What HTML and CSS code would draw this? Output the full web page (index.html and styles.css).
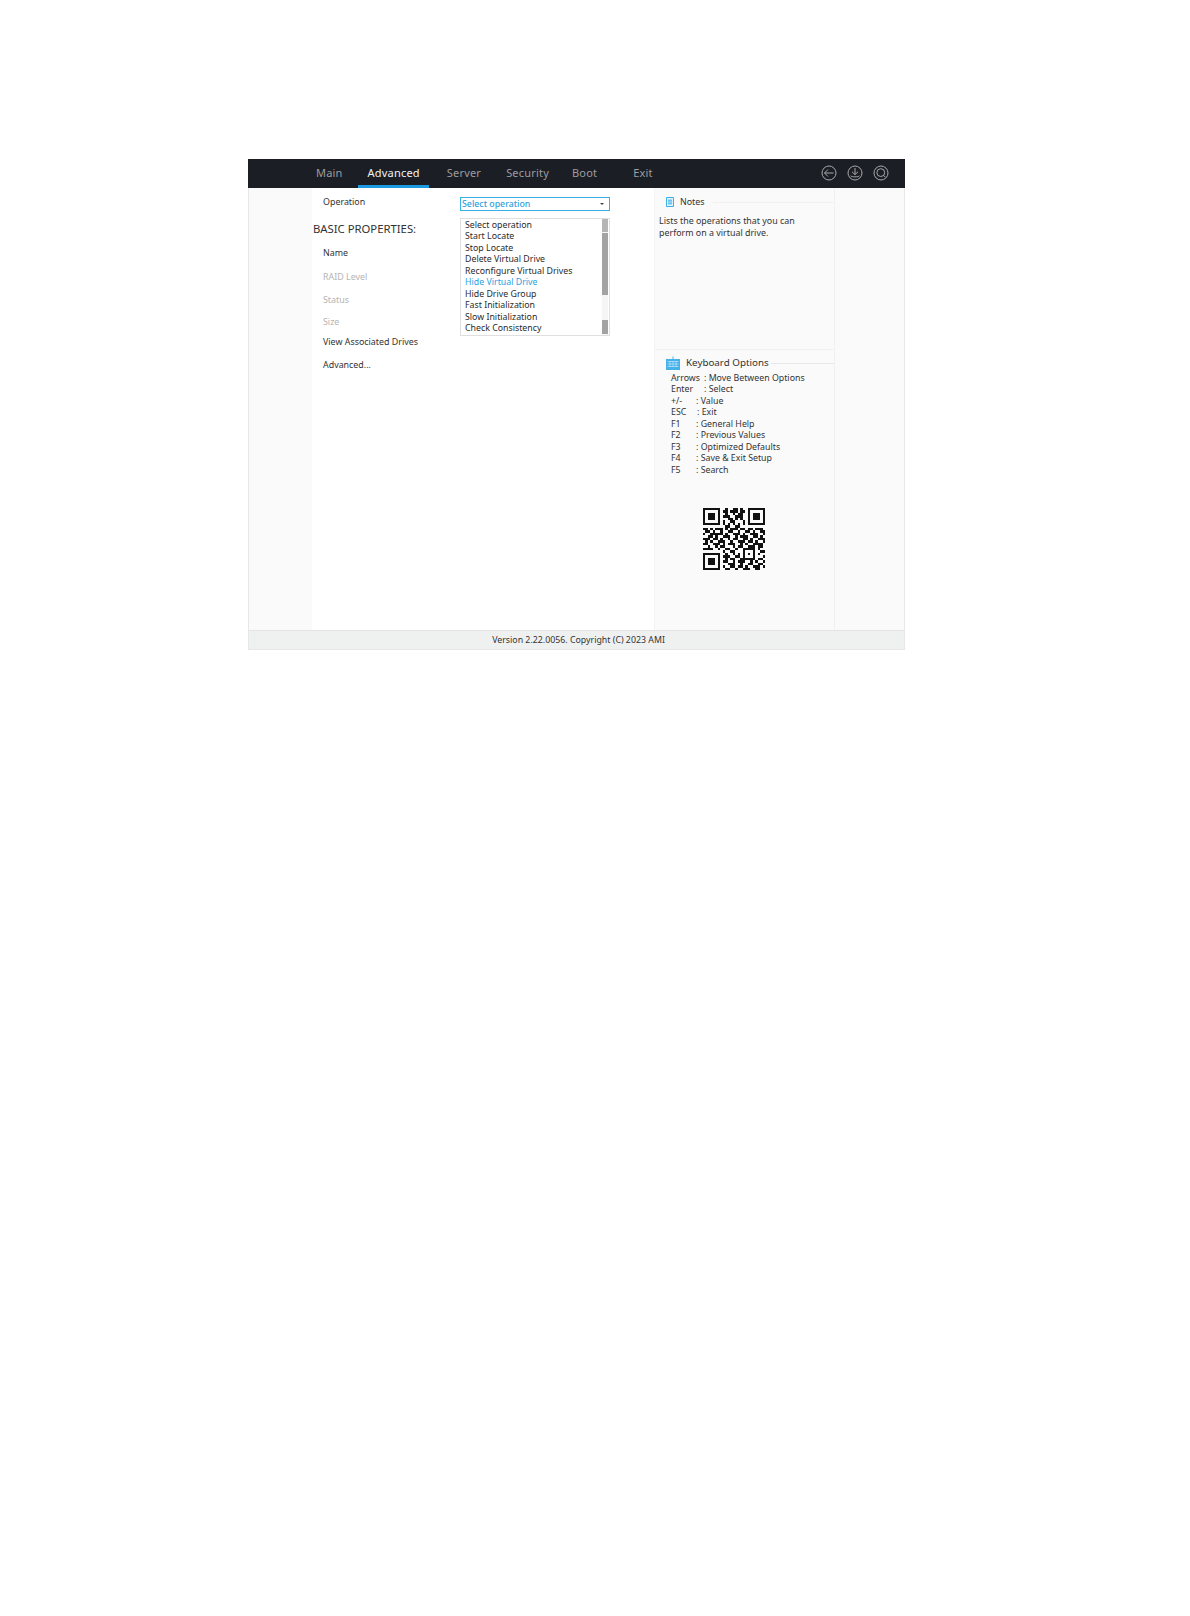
FILE: index.html
```html
<!DOCTYPE html>
<html lang="en">
<head>
    <meta charset="UTF-8">
    <title>BIOS Setup - Advanced</title>
    <link rel="stylesheet" href="styles.css">
</head>
<body>
    <div class="setup-screen">
        <!-- Top menu -->
        <div class="top-bar">
            <div class="tabs">
                <span class="tab tab-main">Main</span>
                <span class="tab tab-advanced active">Advanced</span>
                <span class="tab tab-server">Server</span>
                <span class="tab tab-security">Security</span>
                <span class="tab tab-boot">Boot</span>
                <span class="tab tab-exit">Exit</span>
            </div>
            <div class="top-icons">
                <svg class="top-icon" viewBox="0 0 16 16"><circle cx="8" cy="8" r="7"/><path d="M3.5 8h9M7 4.5 3.5 8 7 11.5"/></svg>
                <svg class="top-icon" viewBox="0 0 16 16"><circle cx="8" cy="8" r="7"/><path d="M8 3v6.5M5 6.8 8 9.6l3-2.8M3.6 10.8c1 1.4 8 1.4 8.8 0"/></svg>
                <svg class="top-icon" viewBox="0 0 16 16"><circle cx="8" cy="8" r="7"/><circle cx="7.8" cy="7.6" r="3.9"/><path d="M10.6 10.4 12.4 12.2"/></svg>
            </div>
        </div>

        <div class="main">
            <div class="gutter"></div>

            <div class="content">
                <div class="props">
                    <div class="prop first">Operation</div>
                    <div class="section-title">BASIC PROPERTIES:</div>
                    <div class="prop prop-name">Name</div>
                    <div class="prop prop-raid disabled">RAID Level</div>
                    <div class="prop prop-status disabled">Status</div>
                    <div class="prop prop-size disabled">Size</div>
                    <div class="prop prop-view">View Associated Drives</div>
                    <div class="prop prop-adv">Advanced...</div>
                </div>

                <div class="operation-col">
                    <div class="select-box">
                        <span>Select operation</span>
                        <span class="caret"></span>
                    </div>
                    <div class="list-box">
                        <div class="list-items">
                            <div>Select operation</div>
                            <div>Start Locate</div>
                            <div>Stop Locate</div>
                            <div>Delete Virtual Drive</div>
                            <div>Reconfigure Virtual Drives</div>
                            <div class="current">Hide Virtual Drive</div>
                            <div>Hide Drive Group</div>
                            <div>Fast Initialization</div>
                            <div>Slow Initialization</div>
                            <div>Check Consistency</div>
                        </div>
                        <div class="scrollbar">
                            <div class="thumb thumb-top"></div>
                            <div class="thumb thumb-mid"></div>
                            <div class="thumb thumb-end"></div>
                        </div>
                    </div>
                </div>
            </div>

            <!-- Notes and keyboard help -->
            <div class="side">
                <div class="notes">
                    <div class="side-title notes-title">
                        <svg class="notes-icon" viewBox="0 0 8 10"><path d="M.5.5h7v9h-7z"/><path d="M2 3.2h4M2 5h4M2 6.8h4"/></svg>
                        <span>Notes</span>
                    </div>
                    <p>Lists the operations that you can<br>perform on a virtual drive.</p>
                </div>

                <div class="keyboard">
                    <div class="side-title keyboard-title">
                        <svg class="keyboard-icon" viewBox="0 0 14 14"><path class="kb-fill" d="M0 3h14v11H0z"/><path class="kb-wire" d="M7 3V.5"/><path class="kb-lines" d="M1.5 5.5h11M1.5 8h11M1.5 10.5h11M4 5v6M7 5v6M10 5v6"/></svg>
                        <span>Keyboard Options</span>
                    </div>
                    <div class="key-list">
                        <div class="key-row"><span class="key wide">Arrows</span><span>: Move Between Options</span></div>
                        <div class="key-row"><span class="key wide">Enter</span><span>: Select</span></div>
                        <div class="key-row"><span class="key">+/-</span><span>: Value</span></div>
                        <div class="key-row"><span class="key esc">ESC</span><span>: Exit</span></div>
                        <div class="key-row"><span class="key">F1</span><span>: General Help</span></div>
                        <div class="key-row"><span class="key">F2</span><span>: Previous Values</span></div>
                        <div class="key-row"><span class="key">F3</span><span>: Optimized Defaults</span></div>
                        <div class="key-row"><span class="key">F4</span><span>: Save &amp; Exit Setup</span></div>
                        <div class="key-row"><span class="key">F5</span><span>: Search</span></div>
                    </div>
                    <svg class="qr" viewBox="0 0 25 25" shape-rendering="crispEdges">
                        <path d="M0 .5h7M9 .5h1M12 .5h2M15 .5h1M18 .5h7
                        M0 1.5h1M6 1.5h1M8 1.5h2M11 1.5h3M15 1.5h2M18 1.5h1M24 1.5h1
                        M0 2.5h1M2 2.5h3M6 2.5h1M9 2.5h1M12 2.5h1M14 2.5h2M18 2.5h1M20 2.5h3M24 2.5h1
                        M0 3.5h1M2 3.5h3M6 3.5h1M8 3.5h3M13 3.5h3M18 3.5h1M20 3.5h3M24 3.5h1
                        M0 4.5h1M2 4.5h3M6 4.5h1M10 4.5h2M13 4.5h1M15 4.5h1M18 4.5h1M20 4.5h3M24 4.5h1
                        M0 5.5h1M6 5.5h1M8 5.5h1M11 5.5h2M16 5.5h1M18 5.5h1M24 5.5h1
                        M0 6.5h7M8 6.5h1M10 6.5h1M12 6.5h1M14 6.5h1M16 6.5h1M18 6.5h7
                        M9 7.5h2M13 7.5h2
                        M0 8.5h2M3 8.5h1M5 8.5h3M9 8.5h1M11 8.5h3M15 8.5h2M18 8.5h2M21 8.5h3
                        M1 9.5h2M4 9.5h1M7 9.5h1M10 9.5h2M14 9.5h1M17 9.5h2M20 9.5h1M23 9.5h2
                        M0 10.5h1M3 10.5h5M9 10.5h1M12 10.5h3M16 10.5h1M19 10.5h3M24 10.5h1
                        M2 11.5h2M5 11.5h1M8 11.5h3M13 11.5h1M15 11.5h3M20 11.5h2M23 11.5h1
                        M0 12.5h3M4 12.5h2M7 12.5h1M10 12.5h1M12 12.5h2M16 12.5h2M19 12.5h1M22 12.5h3
                        M1 13.5h1M3 13.5h1M6 13.5h3M11 13.5h1M14 13.5h3M18 13.5h2M21 13.5h1M24 13.5h1
                        M0 14.5h2M4 14.5h3M8 14.5h1M10 14.5h3M15 14.5h1M17 14.5h1M20 14.5h3M23 14.5h1
                        M2 15.5h1M5 15.5h1M7 15.5h2M12 15.5h1M14 15.5h2M18 15.5h3M22 15.5h2
                        M0 16.5h4M6 16.5h1M9 16.5h2M13 16.5h1M16 16.5h5M22 16.5h1
                        M8 17.5h1M11 17.5h2M16 17.5h1M20 17.5h1M23 17.5h2
                        M0 18.5h7M9 18.5h1M12 18.5h1M14 18.5h1M16 18.5h1M18 18.5h1M20 18.5h1M22 18.5h1
                        M0 19.5h1M6 19.5h1M8 19.5h3M13 19.5h2M16 19.5h1M20 19.5h1M24 19.5h1
                        M0 20.5h1M2 20.5h3M6 20.5h1M9 20.5h1M11 20.5h2M15 20.5h6M22 20.5h2
                        M0 21.5h1M2 21.5h3M6 21.5h1M8 21.5h2M12 21.5h1M14 21.5h3M19 21.5h1M21 21.5h1M24 21.5h1
                        M0 22.5h1M2 22.5h3M6 22.5h1M10 22.5h3M15 22.5h1M18 22.5h2M22 22.5h2
                        M0 23.5h1M6 23.5h1M8 23.5h1M11 23.5h2M14 23.5h2M17 23.5h1M20 23.5h3M24 23.5h1
                        M0 24.5h7M9 24.5h2M13 24.5h1M16 24.5h3M21 24.5h2"/>
                    </svg>
                </div>
            </div>

            <div class="gutter-right"></div>
        </div>

        <div class="footer">Version 2.22.0056. Copyright (C) 2023 AMI</div>
    </div>
</body>
</html>
```

FILE: styles.css
```css
* {
    margin: 0;
    padding: 0;
    box-sizing: border-box;
}

body {
    font-family: "Noto Sans", "DejaVu Sans", sans-serif;
    background: white;
    color: #2b2b2b;
    padding: 159px 0 0 248px;
}

.setup-screen {
    width: 657px;
    height: 491px;
    display: flex;
    flex-direction: column;
    border: 1px solid #e6e8e7;
    border-top: none;
}

/* Top menu */
.top-bar {
    height: 29px;
    margin: 0 -1px;
    background: #1c1e26;
    display: flex;
    flex: none;
    justify-content: space-between;
}

.tabs {
    display: flex;
    padding-left: 68px;
}

.tab {
    font-size: 11px;
    line-height: 27px;
    color: #9b9d9f;
    letter-spacing: 0.2px;
}

.tab-server {
    margin-left: 18px;
}

.tab-security {
    margin-left: 25px;
}

.tab-boot {
    margin-left: 23px;
}

.tab-exit {
    margin-left: 36px;
}

.tab.active {
    color: #f2f2f2;
    padding: 0 9px 0 10px;
    margin-left: 15px;
    border-bottom: 3px solid #1a9be0;
}

.top-icons {
    display: flex;
    align-items: center;
    gap: 10px;
    padding-right: 16px;
    padding-bottom: 1px;
}

.top-icon {
    width: 16px;
    height: 16px;
    fill: none;
    stroke: #a8a8a8;
    stroke-width: 1;
}

.main {
    flex: 1;
    display: flex;
    min-height: 0;
}

.gutter {
    width: 63px;
    background: #fafafa;
}

.gutter-right {
    flex: 1;
    background: #fafafa;
    border-left: 1px solid #f1f1f1;
}

/* Left column */
.content {
    width: 342px;
    display: flex;
    background: white;
}

.props {
    width: 148px;
    font-size: 8.9px;
    line-height: 12px;
    padding-top: 8px;
}

.prop {
    padding-left: 11px;
    color: #333;
}

.section-title {
    font-size: 11.3px;
    line-height: 14px;
    margin-top: 14px;
    padding-left: 1px;
    color: #333;
}

.prop-name {
    margin-top: 11px;
}

.prop-raid {
    margin-top: 12px;
}

.prop-status {
    margin-top: 11px;
}

.prop-size {
    margin-top: 10px;
}

.prop-view {
    margin-top: 8px;
}

.prop-adv {
    margin-top: 11px;
}

.prop.disabled {
    color: #b4b4b4;
}

/* Operation select */
.operation-col {
    width: 150px;
    padding-top: 9px;
}

.select-box {
    height: 14px;
    border: 1px solid #3ab0e8;
    color: #2f9fdc;
    font-size: 8.8px;
    font-weight: 500;
    line-height: 12px;
    padding: 0 5px 0 1px;
    display: flex;
    align-items: center;
    justify-content: space-between;
}

.caret {
    width: 0;
    height: 0;
    border-left: 2px solid transparent;
    border-right: 2px solid transparent;
    border-top: 2px solid #444;
}

.list-box {
    height: 118px;
    margin-top: 7px;
    border: 1px solid #dfdfdf;
    display: flex;
    justify-content: space-between;
}

.list-items {
    padding: 1px 0 0 4px;
    font-size: 8.8px;
    line-height: 11.45px;
    color: #2b2b2b;
    white-space: nowrap;
}

.list-items .current {
    color: #2b9fe0;
}

.scrollbar {
    width: 6px;
    margin-right: 1px;
    display: flex;
    flex-direction: column;
    background: #f5f5f5;
}

.thumb {
    background: #a3a3a3;
}

.thumb-top {
    height: 13px;
    background: #b5b5b5;
}

.thumb-mid {
    height: 62px;
    margin-top: 1px;
}

.thumb-end {
    height: 14px;
    margin-top: auto;
    margin-bottom: 1px;
}

/* Notes and keyboard help */
.side {
    width: 180px;
    background: #fafafa;
    border-left: 1px solid #f3f3f3;
    display: flex;
    flex-direction: column;
}

.notes {
    height: 162px;
    padding-top: 8px;
    border-bottom: 1px solid #f1f1f1;
}

.side-title {
    display: flex;
    align-items: center;
    font-size: 8.9px;
    line-height: 12px;
    color: #333;
    padding-left: 11px;
}

.notes-title::after {
    content: "";
    flex: 1;
    height: 1px;
    margin-left: 8px;
    background: #f1f1f1;
}

.notes-icon {
    width: 8px;
    height: 10px;
    margin-right: 6px;
    fill: #dff1fb;
    stroke: #3ab0e8;
    stroke-width: 1;
}

.notes p {
    font-size: 8.9px;
    line-height: 11.5px;
    padding: 7px 0 0 4px;
    color: #333;
}

.keyboard {
    flex: 1;
}

.keyboard-title {
    margin-top: 6px;
    font-size: 9.8px;
    line-height: 14px;
}

.keyboard-title::after {
    content: "";
    flex: 1;
    height: 1px;
    margin-left: 2px;
    background: #e8e8e8;
}

.keyboard-icon {
    width: 14px;
    height: 14px;
    margin-right: 6px;
}

.kb-fill {
    fill: #45b2ea;
}

.kb-wire {
    fill: none;
    stroke: #45b2ea;
    stroke-width: 1;
}

.kb-lines {
    fill: none;
    stroke: #bfe4f8;
    stroke-width: 0.7;
}

.key-list {
    margin-top: 3px;
    padding-left: 16px;
    font-size: 8.8px;
    line-height: 11.45px;
    color: #333;
}

.key-row {
    display: flex;
    white-space: nowrap;
}

.key {
    width: 25px;
}

.key.wide {
    width: 33px;
}

.key.esc {
    width: 26px;
}

.qr {
    display: block;
    width: 62px;
    height: 62px;
    margin: 32px 0 0 48px;
    fill: none;
    stroke: #111;
    stroke-width: 1;
}

.footer {
    height: 19px;
    flex: none;
    background: #eff1f0;
    border-top: 1px solid #e3e5e4;
    text-align: center;
    font-size: 8.8px;
    line-height: 18px;
    color: #333;
    padding-left: 4px;
}
```
